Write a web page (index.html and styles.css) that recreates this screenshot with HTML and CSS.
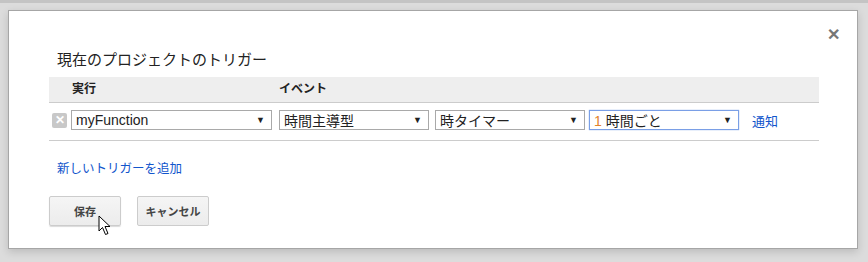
FILE: index.html
```html
<!DOCTYPE html>
<html lang="ja">
<head>
    <meta charset="UTF-8">
    <title>トリガー</title>
    <link rel="stylesheet" href="styles.css">
</head>
<body>

<div class="topbar"></div>

<div class="dialog">
    <span class="close">&#x2715;</span>
    <p class="title">現在のプロジェクトのトリガー</p>

    <div class="table">
        <div class="head">
            <span class="col-run">実行</span>
            <span class="col-event">イベント</span>
        </div>
        <div class="row">
            <span class="remove">&#x2715;</span>
            <div class="select w-fn"><span>myFunction</span><i>&#9660;</i></div>
            <div class="select w-ev"><span>時間主導型</span><i>&#9660;</i></div>
            <div class="select w-ev"><span>時タイマー</span><i>&#9660;</i></div>
            <div class="select w-ev focus"><span><b class="num">1</b> 時間ごと</span><i>&#9660;</i></div>
            <a class="link notify" href="#">通知</a>
        </div>
    </div>

    <a class="link add" href="#">新しいトリガーを追加</a>

    <div class="buttons">
        <button class="btn save">保存</button>
        <button class="btn">キャンセル</button>
        <svg class="cursor" width="14" height="21" viewBox="0 0 14 21">
            <path d="M1 1 L1 16 L4.5 12.5 L7.5 19.5 L10 18.5 L7 11.5 L12 11.5 Z" fill="#fff" stroke="#000" stroke-width="1"/>
        </svg>
    </div>
</div>

</body>
</html>
```

FILE: styles.css
```css
body {
    margin: 0;
    height: 262px;
    background: #dcdcdc;
    font-family: "Liberation Sans", "Noto Sans CJK JP", sans-serif;
    font-size: 13px;
    color: #222;
    overflow: hidden;
}
.topbar {
    height: 3px;
    background: #c4c4c4;
}
.dialog {
    position: relative;
    margin: 7px 0 0 8px;
    width: 850px;
    height: 239px;
    box-sizing: border-box;
    background: #fff;
    border: 1px solid #a6a6a6;
    box-shadow: 0 3px 8px rgba(0, 0, 0, 0.15);
    padding: 0 0 0 40px;
}
.close {
    position: absolute;
    right: 17px;
    top: 14px;
    font-size: 16px;
    font-weight: bold;
    color: #777;
}
.title {
    margin: 0;
    padding: 40px 0 0 8px;
    font-size: 15px;
    line-height: 18px;
    color: #222;
}
.table {
    margin-top: 8px;
    width: 770px;
    border-bottom: 1px solid #ccc;
}
.head {
    display: flex;
    height: 25px;
    background: #eee;
    border-bottom: 1px solid #ccc;
    font-size: 12px;
    font-weight: bold;
    line-height: 24px;
    color: #222;
}
.col-run {
    padding-left: 23px;
    width: 207px;
}
.row {
    display: flex;
    align-items: center;
    height: 37px;
    padding: 0 0 3px 3px;
    box-sizing: border-box;
}
.remove {
    display: inline-flex;
    justify-content: center;
    align-items: center;
    width: 15px;
    height: 15px;
    background: #c8c8c8;
    color: #fff;
    font-size: 12px;
    font-weight: bold;
    border-radius: 2px;
    margin-right: 4px;
}
.select {
    display: flex;
    justify-content: space-between;
    align-items: center;
    height: 20px;
    box-sizing: border-box;
    border: 1px solid #a9a9a9;
    padding: 0 6px 0 4px;
    margin-right: 6px;
    font-size: 14px;
    color: #222;
}
.select i {
    font-style: normal;
    font-size: 9px;
}
.w-fn {
    width: 201px;
    margin-right: 7px;
}
.w-ev {
    width: 150px;
}
.focus {
    border-color: #7a9fe6;
    box-shadow: 0 0 1px #7a9fe6;
    margin-left: -2px;
    margin-right: 13px;
}
.num {
    font-weight: normal;
    color: #e3832a;
}
.link {
    color: #15c;
    text-decoration: none;
    font-size: 13px;
}
.add {
    display: block;
    margin: 20px 0 0 8px;
    line-height: 16px;
    font-size: 12.5px;
}
.buttons {
    position: relative;
    display: flex;
    gap: 16px;
    margin-top: 19px;
}
.btn {
    height: 30px;
    box-sizing: border-box;
    border: 1px solid #ccc;
    border-radius: 2px;
    background: linear-gradient(#f5f5f5, #ececec);
    font-family: "Noto Sans CJK JP", sans-serif;
    font-size: 11px;
    font-weight: bold;
    color: #444;
    padding: 0 6px;
    min-width: 72px;
}
.save {
    box-shadow: 0 1px 1px rgba(0, 0, 0, 0.15);
}
.cursor {
    position: absolute;
    left: 49px;
    top: 19px;
}
```
